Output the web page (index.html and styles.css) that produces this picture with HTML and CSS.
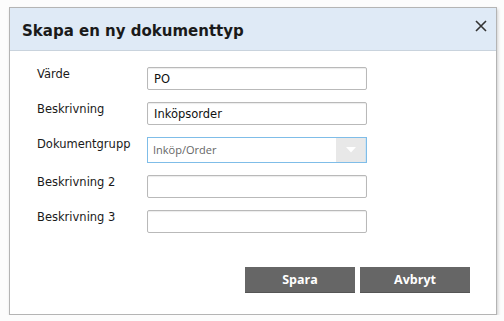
FILE: index.html
```html
<!DOCTYPE html>
<html lang="sv">
<head>
<meta charset="utf-8">
<title>Skapa en ny dokumenttyp</title>
<link rel="stylesheet" href="styles.css">
</head>
<body>
<div class="dialog">
  <div class="dialog-header">
    <h1 class="dialog-title">Skapa en ny dokumenttyp</h1>
    <button class="close-btn" aria-label="Stäng">
      <svg width="12" height="12" viewBox="0 0 12 12"><path d="M1 1 L11 11 M11 1 L1 11" stroke="#333" stroke-width="1.6" fill="none"/></svg>
    </button>
  </div>
  <div class="dialog-body">
    <div class="form">
      <div class="row"><label class="label">Värde</label><div class="input">PO</div></div>
      <div class="row"><label class="label">Beskrivning</label><div class="input">Inköpsorder</div></div>
      <div class="row"><label class="label">Dokumentgrupp</label>
        <div class="select"><span class="select-text">Inköp/Order</span><span class="select-arrow"><svg width="10" height="6" viewBox="0 0 10 6"><path d="M0 0 L10 0 L5 5.5 Z" fill="#fff"/></svg></span></div>
      </div>
      <div class="row"><label class="label">Beskrivning 2</label><div class="input"></div></div>
      <div class="row"><label class="label">Beskrivning 3</label><div class="input"></div></div>
    </div>
    <div class="actions">
      <button class="btn">Spara</button>
      <button class="btn">Avbryt</button>
    </div>
  </div>
</div>
</body>
</html>
```
FILE: styles.css
```css
html, body {
  margin: 0;
  padding: 0;
  background: #fcfcfc;
}
body {
  padding: 7px 0 0 9px;
}
.dialog {
  width: 486px;
  height: 306px;
  border: 1px solid #b4b4b4;
  background: #fff;
  box-shadow: 1px 2px 3px rgba(0,0,0,0.18);
  display: flex;
  flex-direction: column;
}
.dialog-header {
  height: 42px;
  background: #dfeaf6;
  border-bottom: 1px solid #c9d3dd;
  display: flex;
  align-items: center;
  justify-content: space-between;
  padding: 0 9px 0 12px;
}
.dialog-title {
  margin: 0;
  font-family: "DejaVu Sans", Verdana, sans-serif;
  font-weight: bold;
  font-size: 15px;
  color: #1a1a1a;
  padding-top: 3px;
}
.close-btn {
  border: 0;
  background: none;
  padding: 0;
  margin-top: -6px;
  width: 12px;
  height: 12px;
  display: flex;
}
.dialog-body {
  padding: 16px 26px 0 27px;
  display: flex;
  flex-direction: column;
}
.form {
  display: flex;
  flex-direction: column;
  gap: 12px;
}
.row {
  display: flex;
  align-items: flex-start;
}
.label {
  width: 110px;
  font-family: "DejaVu Sans", Verdana, sans-serif;
  font-size: 11.5px;
  line-height: 14px;
  color: #1a1a1a;
}
.input {
  box-sizing: border-box;
  width: 220px;
  height: 23px;
  border: 1px solid #b9b9b9;
  border-radius: 2px;
  box-shadow: inset 0 1px 1px rgba(0,0,0,0.08);
  font-family: "DejaVu Sans", Verdana, sans-serif;
  font-size: 11.5px;
  line-height: 21px;
  padding: 1px 6px 0;
  color: #111;
}
.select {
  box-sizing: border-box;
  width: 220px;
  height: 26px;
  border: 1px solid #7fbde8;
  display: flex;
  align-items: stretch;
}
.select-text {
  flex: 1;
  font-family: "Open Sans", sans-serif;
  font-size: 11px;
  color: #666;
  line-height: 24px;
  padding-left: 5px;
}
.select-arrow {
  width: 29px;
  background: #e8e8e8;
  display: flex;
  align-items: center;
  justify-content: center;
  border-right: 1px solid #cfe3f1;
}
.actions {
  display: flex;
  justify-content: flex-end;
  gap: 5px;
  margin-top: 34px;
}
.btn {
  width: 110px;
  height: 26px;
  border: 0;
  background: #666;
  color: #fff;
  font-family: "Open Sans", sans-serif;
  font-weight: bold;
  font-size: 12.5px;
  padding: 0;
  border-bottom: 1px solid #555;
}
```
